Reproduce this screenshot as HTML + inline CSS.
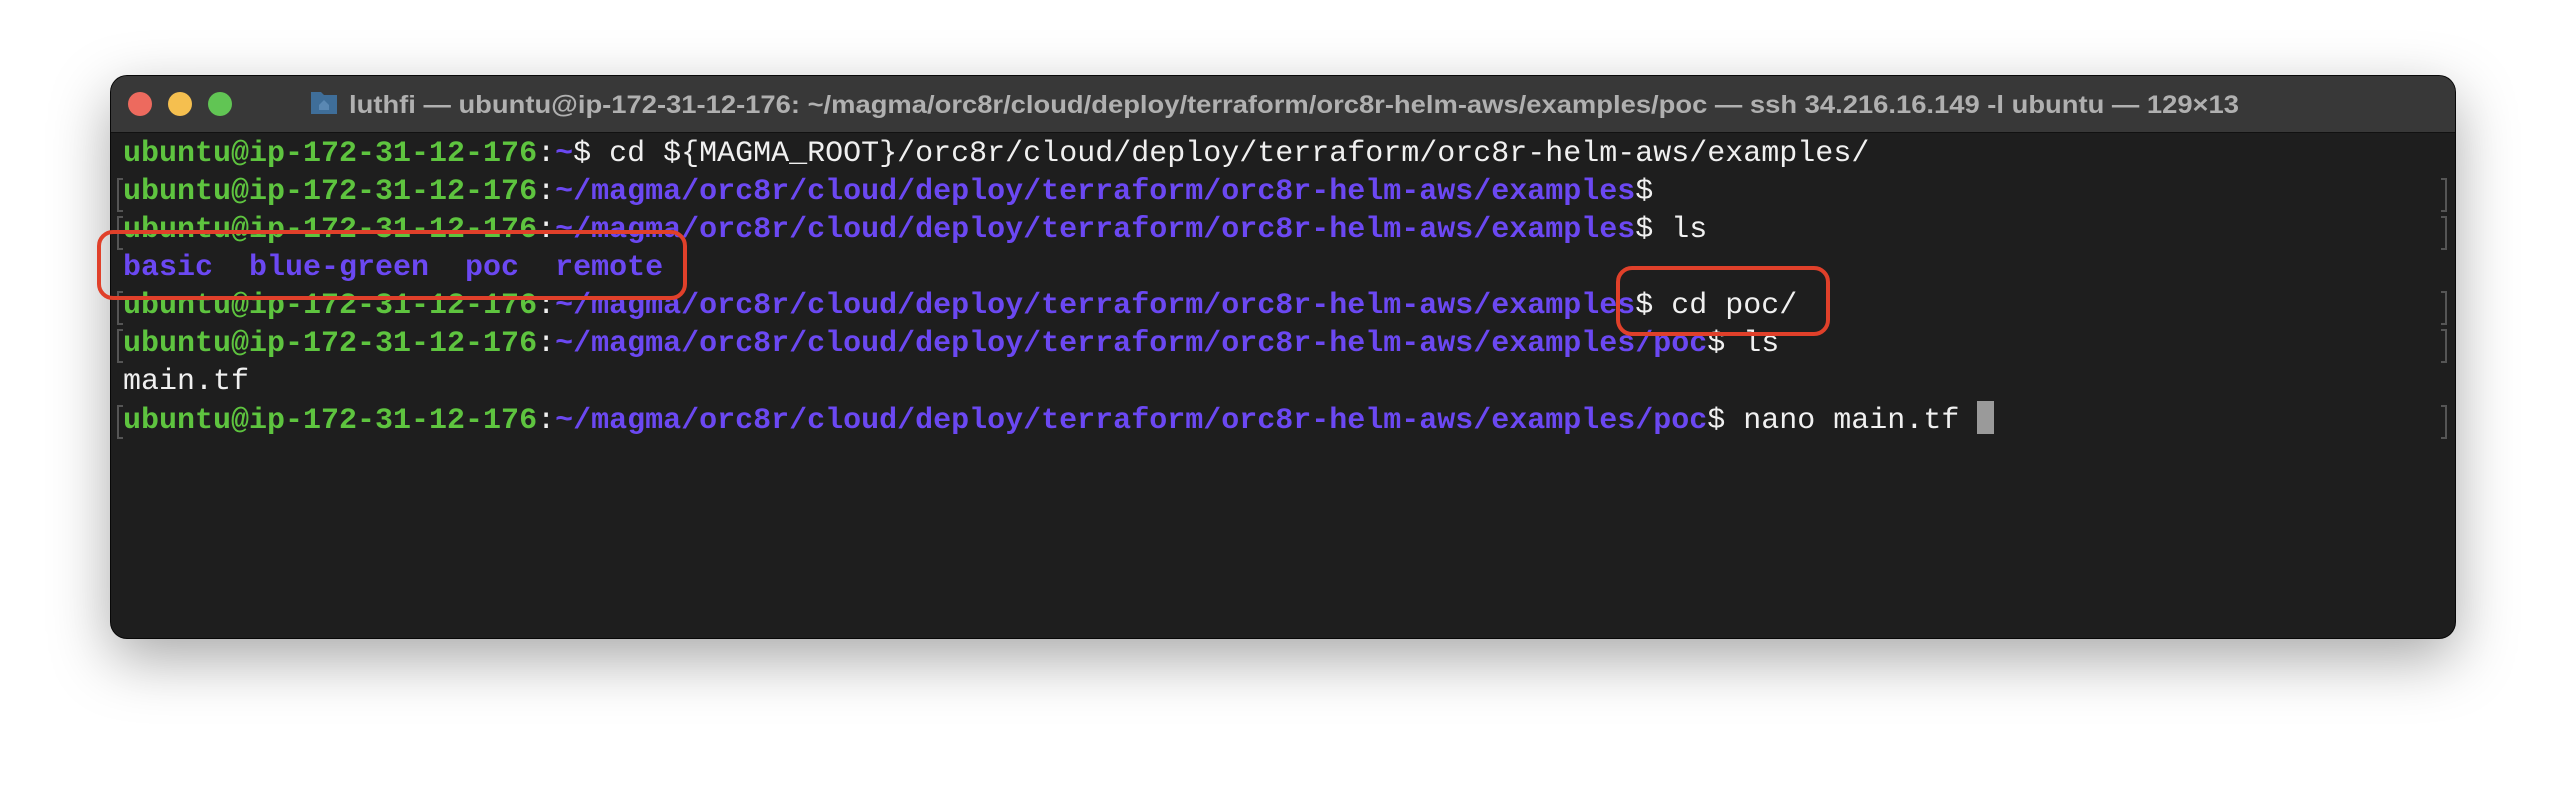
<!DOCTYPE html>
<html><head><meta charset="utf-8"><style>
html,body{margin:0;padding:0;background:#fff;width:2566px;height:786px;overflow:hidden;position:relative}
.win{position:absolute;left:111px;top:76px;width:2344px;height:562px;border-radius:16px;background:#1e1e1e;box-shadow:0 20px 60px rgba(0,0,0,0.35),0 0 0 1px #0a0a0a;overflow:hidden}
.tb{position:absolute;left:0;top:0;width:100%;height:56px;background:#383838;border-bottom:1px solid #111}
.dot{position:absolute;top:16px;width:24px;height:24px;border-radius:50%}
.term{position:absolute;left:12px;top:59px;font-family:"Liberation Mono",monospace;font-size:30px;line-height:38px;color:#f0f0f0;font-weight:bold}
.term div{height:38px;white-space:pre}
.g{color:#5ec43f}.p{color:#6b48f2}.w{color:#f0f0f0;font-weight:normal}
.br{position:absolute;width:4px;height:30px;border:2px solid #555;}
.box{position:absolute;border:4px solid #e0402a;border-radius:16px}
</style></head><body>
<div class="win">
 <div class="tb">
  <div class="dot" style="left:17px;background:#ed6a5e"></div>
  <div class="dot" style="left:57px;background:#f5bf4f"></div>
  <div class="dot" style="left:97px;background:#61c554"></div>
  <svg style="position:absolute;left:199px;top:12px" width="28" height="27"><path d="M1 4 h10 l3 3 h13 v19 h-26z" fill="#3f6e99"/><path d="M9 17 l5-5 l5 5 v5 h-10z" fill="#5a88b3"/></svg>
  <svg style="position:absolute;left:238px;top:0" width="1980" height="56"><text x="0" y="37" textLength="1890" lengthAdjust="spacingAndGlyphs" font-family="Liberation Sans, sans-serif" font-size="25" font-weight="bold" fill="#b0b0b0">luthfi — ubuntu@ip-172-31-12-176: ~/magma/orc8r/cloud/deploy/terraform/orc8r-helm-aws/examples/poc — ssh 34.216.16.149 -l ubuntu — 129×13</text></svg>
 </div>
 <div class="term"><div><span class="g">ubuntu@ip-172-31-12-176</span><span class="w">:</span><span class="p">~</span><span class="w">$ cd ${MAGMA_ROOT}/orc8r/cloud/deploy/terraform/orc8r-helm-aws/examples/</span></div><div><span class="g">ubuntu@ip-172-31-12-176</span><span class="w">:</span><span class="p">~/magma/orc8r/cloud/deploy/terraform/orc8r-helm-aws/examples</span><span class="w">$</span></div><div><span class="g">ubuntu@ip-172-31-12-176</span><span class="w">:</span><span class="p">~/magma/orc8r/cloud/deploy/terraform/orc8r-helm-aws/examples</span><span class="w">$ ls</span></div><div><span class="p">basic  blue-green  poc  remote</span></div><div><span class="g">ubuntu@ip-172-31-12-176</span><span class="w">:</span><span class="p">~/magma/orc8r/cloud/deploy/terraform/orc8r-helm-aws/examples</span><span class="w">$ cd poc/</span></div><div><span class="g">ubuntu@ip-172-31-12-176</span><span class="w">:</span><span class="p">~/magma/orc8r/cloud/deploy/terraform/orc8r-helm-aws/examples/poc</span><span class="w">$ ls</span></div><div><span class="w">main.tf</span></div><div><span class="g">ubuntu@ip-172-31-12-176</span><span class="w">:</span><span class="p">~/magma/orc8r/cloud/deploy/terraform/orc8r-helm-aws/examples/poc</span><span class="w">$ nano main.tf </span><span style="display:inline-block;width:17px;height:33px;background:#9a9a9a;vertical-align:-6px"></span></div></div>
 <div class="br" style="left:6px;top:102px;border-right:none"></div>
 <div class="br" style="left:6px;top:140px;border-right:none"></div>
 <div class="br" style="left:6px;top:215px;border-right:none"></div>
 <div class="br" style="left:6px;top:253px;border-right:none"></div>
 <div class="br" style="left:6px;top:329px;border-right:none"></div>
 <div class="br" style="left:2330px;top:102px;border-left:none"></div>
 <div class="br" style="left:2330px;top:140px;border-left:none"></div>
 <div class="br" style="left:2330px;top:215px;border-left:none"></div>
 <div class="br" style="left:2330px;top:253px;border-left:none"></div>
 <div class="br" style="left:2330px;top:329px;border-left:none"></div>
</div>
<div class="box" style="left:97px;top:230px;width:582px;height:62px"></div>
<div class="box" style="left:1616px;top:266px;width:206px;height:62px"></div>
</body></html>
